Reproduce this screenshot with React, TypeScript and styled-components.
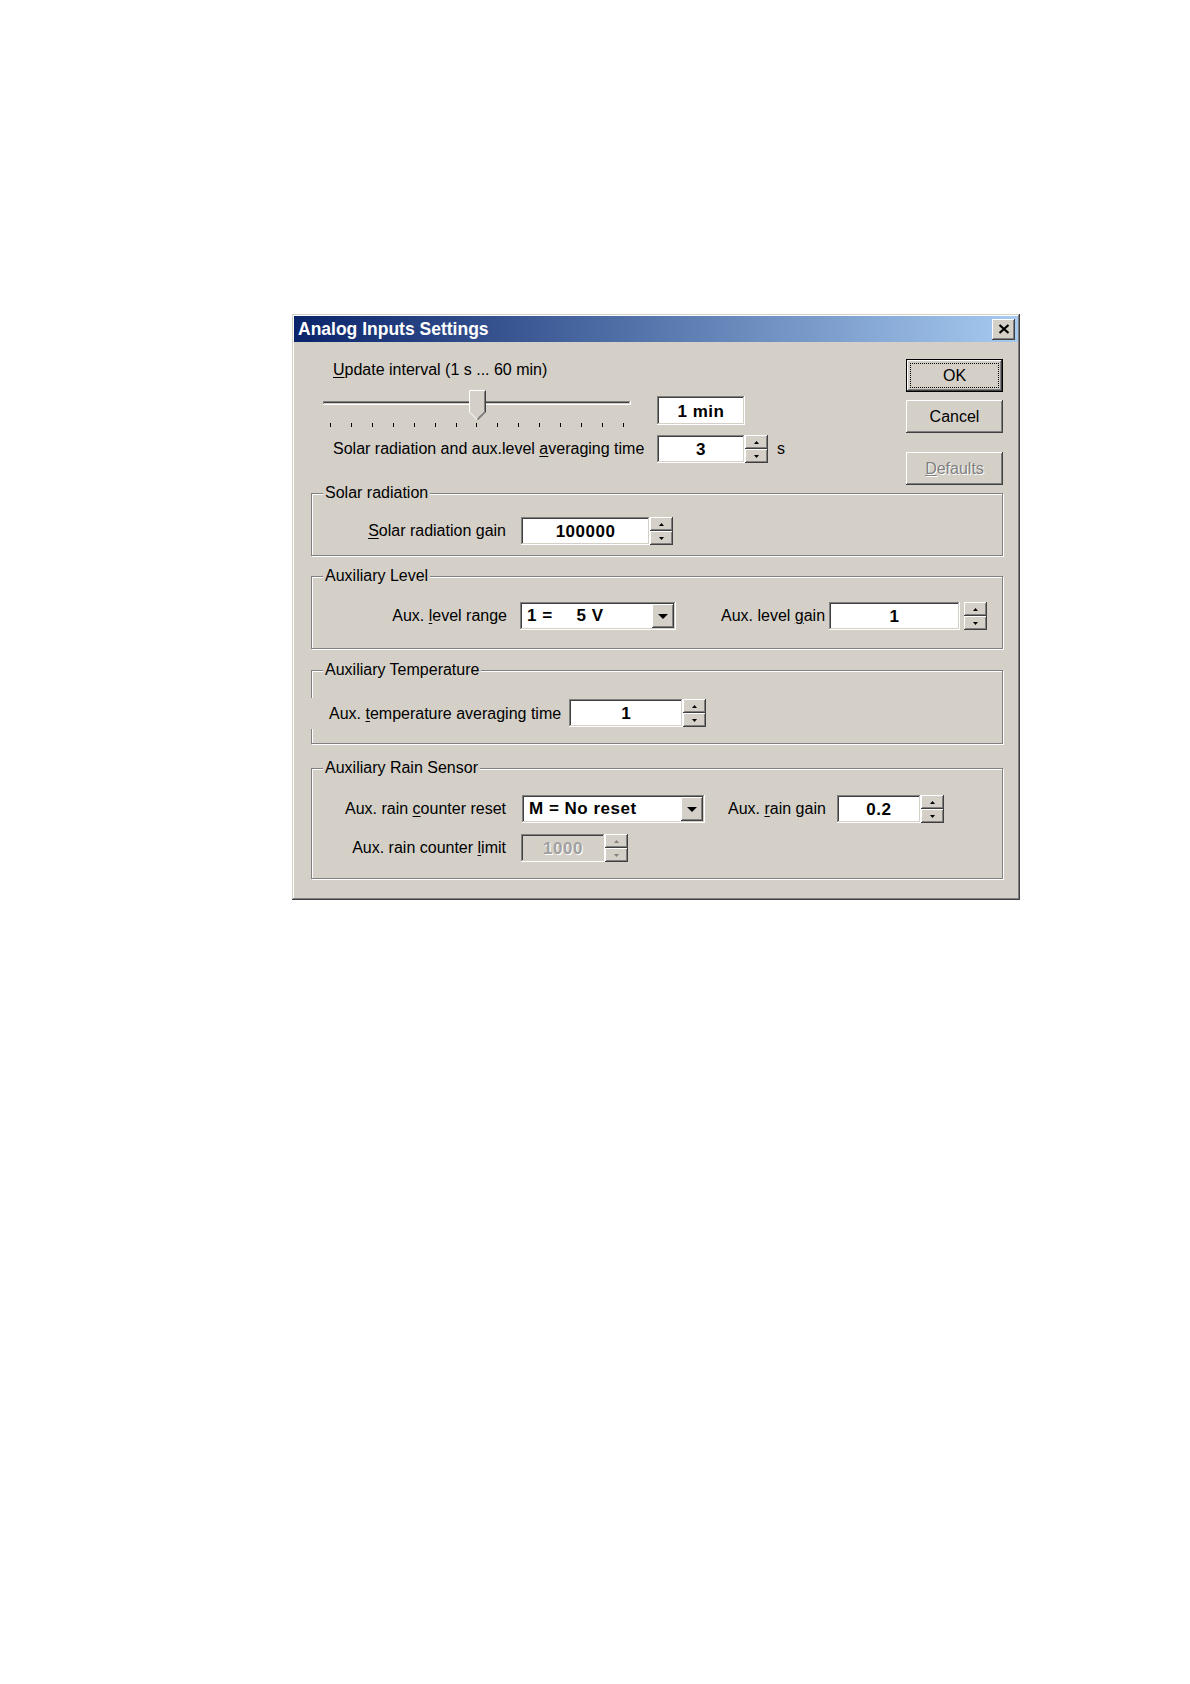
import React from "react";
import styled, { createGlobalStyle, css } from "styled-components";

const GlobalStyle = createGlobalStyle`
  html, body {
    margin: 0;
    padding: 0;
    background: #ffffff;
  }
  body {
    font-family: "Liberation Sans", Arial, sans-serif;
    color: #000;
  }
`;

const raised = css`
  box-shadow: inset -1px -1px #404040, inset 1px 1px #ffffff,
    inset -2px -2px #808080, inset 2px 2px #d4d0c8;
`;

const sunken = css`
  box-shadow: inset -1px -1px #ffffff, inset 1px 1px #808080,
    inset -2px -2px #d4d0c8, inset 2px 2px #404040;
`;

const Page = styled.div`
  box-sizing: border-box;
  height: 1684px;
  padding: 314px 0 0 292px;
`;

const Window = styled.div`
  box-sizing: border-box;
  width: 728px;
  height: 586px;
  padding: 2px;
  background: #d4d0c8;
  display: flex;
  flex-direction: column;
  box-shadow: inset -1px -1px #404040, inset 1px 1px #d4d0c8,
    inset -2px -2px #808080, inset 2px 2px #ffffff;
`;

const TitleBar = styled.div`
  flex: none;
  height: 26px;
  padding: 0 3px 0 4px;
  display: flex;
  align-items: center;
  justify-content: space-between;
  background: linear-gradient(to right, #0a246a, #a6caf0);
`;

const Title = styled.span`
  color: #ffffff;
  font-weight: bold;
  font-size: 17.5px;
`;

const CloseButton = styled.div`
  width: 23px;
  height: 21px;
  background: #d4d0c8;
  display: flex;
  align-items: center;
  justify-content: center;
  ${raised};
`;

const Body = styled.div`
  flex: 1;
  padding: 17px 15px 0 17px;
  display: flex;
  flex-direction: column;
`;

const Top = styled.div`
  height: 127px;
  display: flex;
  justify-content: space-between;
`;

const Settings = styled.div`
  padding: 1px 0 0 12px;
  display: grid;
  grid-template-columns: 334px auto;
  align-content: start;
`;

const Text = styled.span`
  font-size: 16px;
  line-height: 20px;
  white-space: nowrap;
  u {
    text-underline-offset: 2px;
  }
`;

const HeadLabel = styled(Text)`
  grid-column: 1 / 3;
  margin-left: 10px;
`;

const SliderBox = styled.div`
  position: relative;
  width: 308px;
  height: 38px;
  margin-top: 10px;
  padding-top: 11px;
  box-sizing: border-box;
`;

const Track = styled.div`
  height: 4px;
  ${sunken};
`;

const Ticks = styled.div`
  display: flex;
  justify-content: space-between;
  margin: 18px 7px 0 7px;
`;

const Tick = styled.div`
  width: 1px;
  height: 4px;
  background: #000;
`;

const Thumb = styled.svg`
  position: absolute;
  top: 0;
  left: 146px;
`;

const CellRow = styled.div<{ $mt: number }>`
  display: flex;
  align-items: center;
  margin-top: ${(p) => p.$mt}px;
`;

const AvgLabel = styled(Text)`
  margin: 7px 0 0 10px;
  align-self: center;
`;

const Unit = styled(Text)`
  margin-left: 9px;
`;

const Buttons = styled.div`
  width: 97px;
  display: flex;
  flex-direction: column;
`;

const Button = styled.div<{ $mt: number; $default?: boolean; $disabled?: boolean }>`
  box-sizing: border-box;
  height: 33px;
  margin-top: ${(p) => p.$mt}px;
  font-size: 16px;
  display: flex;
  align-items: center;
  justify-content: center;
  background: #d4d0c8;
  ${raised};
  ${(p) =>
    p.$default &&
    css`
      border: 1px solid #000;
      padding: 3px;
    `}
  ${(p) =>
    p.$disabled &&
    css`
      color: #808080;
      text-shadow: 1px 1px 0 #ffffff;
    `}
`;

const FocusRing = styled.span`
  flex: 1;
  align-self: stretch;
  display: flex;
  align-items: center;
  justify-content: center;
  border: 1px dotted #000;
`;

const Group = styled.div<{ $h: number; $mt: number; $pt: number }>`
  position: relative;
  box-sizing: border-box;
  height: ${(p) => p.$h}px;
  margin-top: ${(p) => p.$mt}px;
  padding-top: ${(p) => p.$pt}px;
  border: 1px solid #808080;
  box-shadow: inset 1px 1px 0 #ffffff, 1px 1px 0 #ffffff;
  display: flex;
  flex-direction: column;
`;

const Legend = styled(Text)`
  position: absolute;
  top: -11px;
  left: 11px;
  padding: 0 2px;
  background: #d4d0c8;
`;

const Row = styled.div<{ $mt?: number }>`
  height: 28px;
  margin-top: ${(p) => p.$mt ?? 0}px;
  display: flex;
  align-items: center;
`;

const Label = styled(Text)<{ $w?: number; $mr: number; $ml?: number }>`
  ${(p) => (p.$w ? `width: ${p.$w}px; text-align: right;` : "")}
  margin-right: ${(p) => p.$mr}px;
  margin-left: ${(p) => p.$ml ?? 0}px;
`;

const CoverLabel = styled(Text)`
  margin-left: -2px;
  padding-left: 19px;
  margin-right: 8px;
  height: 31px;
  line-height: 31px;
  background: #d4d0c8;
`;

const Edit = styled.div<{ $w: number; $disabled?: boolean; $h?: number }>`
  box-sizing: border-box;
  width: ${(p) => p.$w}px;
  height: ${(p) => p.$h ?? 28}px;
  padding: 2px 4px 0;
  display: flex;
  align-items: center;
  justify-content: center;
  font-weight: bold;
  font-size: 17px;
  letter-spacing: 0.5px;
  background: ${(p) => (p.$disabled ? "#d4d0c8" : "#ffffff")};
  color: ${(p) => (p.$disabled ? "#a0a0a0" : "#000")};
  ${(p) => p.$disabled && "text-shadow: 1px 1px 0 #ffffff;"}
  ${sunken};
`;

const Spin = styled.div<{ $ml?: number }>`
  width: 23px;
  height: 28px;
  margin-left: ${(p) => p.$ml ?? 0}px;
  display: flex;
  flex-direction: column;
`;

const SpinButton = styled.div`
  flex: 1;
  background: #d4d0c8;
  display: flex;
  align-items: center;
  justify-content: center;
  ${raised};
`;

const Combo = styled.div<{ $w: number }>`
  box-sizing: border-box;
  width: ${(p) => p.$w}px;
  height: 28px;
  padding: 2px;
  display: flex;
  align-items: stretch;
  background: #ffffff;
  ${sunken};
`;

const ComboValue = styled.span`
  flex: 1;
  padding-left: 5px;
  display: flex;
  align-items: center;
  font-weight: bold;
  font-size: 17px;
  letter-spacing: 0.5px;
  white-space: pre;
`;

const DropButton = styled.div`
  width: 22px;
  background: #d4d0c8;
  display: flex;
  align-items: center;
  justify-content: center;
  ${raised};
`;

const Gap = styled.span<{ $w: number }>`
  display: inline-block;
  width: ${(p) => p.$w}px;
`;

const ArrowUp = ({ c = "#000" }: { c?: string }) => (
  <svg width="5" height="3" viewBox="0 0 5 3">
    <polygon points="0,3 5,3 2.5,0" fill={c} />
  </svg>
);

const ArrowDown = ({ c = "#000" }: { c?: string }) => (
  <svg width="5" height="3" viewBox="0 0 5 3">
    <polygon points="0,0 5,0 2.5,3" fill={c} />
  </svg>
);

const Spinner = ({ ml, disabled }: { ml?: number; disabled?: boolean }) => {
  const c = disabled ? "#808080" : "#000";
  return (
    <Spin $ml={ml}>
      <SpinButton>
        <ArrowUp c={c} />
      </SpinButton>
      <SpinButton>
        <ArrowDown c={c} />
      </SpinButton>
    </Spin>
  );
};

const Dropdown = ({ w, children }: { w: number; children: React.ReactNode }) => (
  <Combo $w={w}>
    <ComboValue>{children}</ComboValue>
    <DropButton>
      <svg width="10" height="5" viewBox="0 0 10 5">
        <polygon points="0,0 10,0 5,5" fill="#000" />
      </svg>
    </DropButton>
  </Combo>
);

const TICKS = Array.from({ length: 15 }, (_, i) => i);

export default function App() {
  return (
    <Page>
      <GlobalStyle />
      <Window>
        <TitleBar>
          <Title>Analog Inputs Settings</Title>
          <CloseButton>
            <svg width="12" height="10" viewBox="0 0 12 10">
              <path d="M1.5 1 L10.5 9 M10.5 1 L1.5 9" stroke="#000" strokeWidth="2.2" />
            </svg>
          </CloseButton>
        </TitleBar>
        <Body>
          <Top>
            <Settings>
              <HeadLabel>
                <u>U</u>pdate interval (1 s ... 60 min)
              </HeadLabel>
              <SliderBox>
                <Track />
                <Ticks>
                  {TICKS.map((i) => (
                    <Tick key={i} />
                  ))}
                </Ticks>
                <Thumb width="17" height="31" viewBox="0 0 17 31">
                  <polygon points="0.5,0.5 16.5,0.5 16.5,22 8.5,30 0.5,22" fill="#d4d0c8" />
                  <polyline points="8.5,30 0.5,22 0.5,0.5 16,0.5" fill="none" stroke="#ffffff" />
                  <polyline points="15.5,1.5 15.5,21.6 8.5,28.6" fill="none" stroke="#808080" />
                  <polyline points="16.5,0.5 16.5,22 8.5,30" fill="none" stroke="#404040" />
                </Thumb>
              </SliderBox>
              <CellRow $mt={13}>
                <Edit $w={88} $h={29}>1 min</Edit>
              </CellRow>
              <AvgLabel>
                Solar radiation and aux.level <u>a</u>veraging time
              </AvgLabel>
              <CellRow $mt={7}>
                <Edit $w={88}>3</Edit>
                <Spinner />
                <Unit>s</Unit>
              </CellRow>
            </Settings>
            <Buttons>
              <Button $mt={0} $default>
                <FocusRing>OK</FocusRing>
              </Button>
              <Button $mt={8}>Cancel</Button>
              <Button $mt={19} $disabled>
                <u>D</u>efaults
              </Button>
            </Buttons>
          </Top>

          <Group $h={63} $mt={7} $pt={23}>
            <Legend>Solar radiation</Legend>
            <Row>
              <Label $w={194} $mr={15}>
                <u>S</u>olar radiation gain
              </Label>
              <Edit $w={129}>100000</Edit>
              <Spinner />
            </Row>
          </Group>

          <Group $h={73} $mt={20} $pt={25}>
            <Legend>Auxiliary Level</Legend>
            <Row>
              <Label $w={195} $mr={13}>
                Aux. <u>l</u>evel range
              </Label>
              <Dropdown w={156}>
                1 =<Gap $w={24} />5 V
              </Dropdown>
              <Label $ml={45} $mr={4}>
                Aux. level <u>g</u>ain
              </Label>
              <Edit $w={131}>1</Edit>
              <Spinner ml={4} />
            </Row>
          </Group>

          <Group $h={74} $mt={21} $pt={28}>
            <Legend>Auxiliary Temperature</Legend>
            <Row>
              <CoverLabel>
                Aux. <u>t</u>emperature averaging time
              </CoverLabel>
              <Edit $w={114}>1</Edit>
              <Spinner />
            </Row>
          </Group>

          <Group $h={111} $mt={24} $pt={26}>
            <Legend>Auxiliary Rain Sensor</Legend>
            <Row>
              <Label $w={194} $mr={16}>
                Aux. rain <u>c</u>ounter reset
              </Label>
              <Dropdown w={183}>M = No reset</Dropdown>
              <Label $ml={23} $mr={11}>
                Aux. <u>r</u>ain gain
              </Label>
              <Edit $w={84}>0.2</Edit>
              <Spinner />
            </Row>
            <Row $mt={11}>
              <Label $w={194} $mr={15}>
                Aux. rain counter <u>l</u>imit
              </Label>
              <Edit $w={84} $disabled>
                1000
              </Edit>
              <Spinner disabled />
            </Row>
          </Group>
        </Body>
      </Window>
    </Page>
  );
}
